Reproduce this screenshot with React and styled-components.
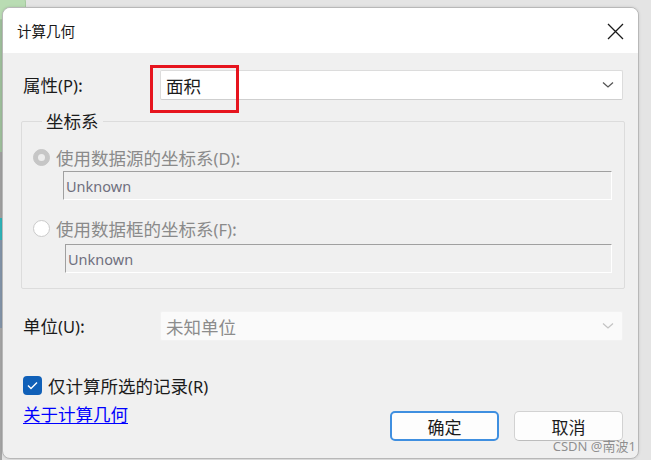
import React from "react";
import styled, { createGlobalStyle } from "styled-components";

const Global = createGlobalStyle`
  html, body { margin: 0; padding: 0; }
  body { background: #e6e6e6; font-family: "Noto Sans CJK SC", "Noto Sans", sans-serif; }
  * { box-sizing: border-box; }
`;

const Page = styled.div`
  position: relative;
  width: 651px;
  height: 460px;
  overflow: hidden;
  background: #e4e4e4;
  padding: 7px 0 0 2px;
`;

const DesktopTab = styled.div`
  position: absolute;
  left: -10px;
  top: -6px;
  width: 36px;
  height: 26px;
  border-radius: 8px;
  background: #b9dcb3;
  border: 1px solid #a7c9a1;
`;

const LeftStrip = styled.div`
  position: absolute;
  left: 0;
  top: 20px;
  width: 2px;
  height: 440px;
  background: linear-gradient(#9fbf9c 0 30%, #a0a0a0 30% 45%, #2fb3b8 45% 50%, #8394a8 50% 70%, #a5a5a5 70%);
`;

const Dialog = styled.div`
  position: relative;
  width: 637px;
  height: 452px;
  border: 1px solid #b8b8b8;
  border-radius: 8px;
  overflow: hidden;
  background: #f0f0f0;
  display: flex;
  flex-direction: column;
  box-shadow: 0 0 3px rgba(0, 0, 0, 0.12);
`;

const TitleBar = styled.div`
  height: 45px;
  flex: none;
  background: #ffffff;
  display: flex;
  align-items: center;
  justify-content: space-between;
  padding: 0 14px 0 14px;
`;

const Title = styled.div`
  font-size: 14.5px;
  color: #1a1a1a;
`;

const CloseBtn = styled.div`
  width: 18px;
  height: 18px;
  display: flex;
  align-items: center;
  justify-content: center;
  margin-top: 1px;
`;

const Body = styled.div`
  flex: 1;
  display: flex;
  flex-direction: column;
  padding: 17px 15px 0 20px;
  font-size: 17.5px;
  color: #1b1b1b;
`;

const FormRow = styled.div`
  display: grid;
  grid-template-columns: 137px 1fr;
  align-items: center;
  height: 30px;
  margin-top: ${(p) => p.$mt || 0}px;
`;

const Label = styled.div`
  line-height: 1;
`;

const Acc = styled.span`
  font-family: "Noto Sans", sans-serif;
  font-size: 16.5px;
`;

const Select = styled.div`
  position: relative;
  height: 30px;
  display: flex;
  align-items: center;
  justify-content: space-between;
  padding: 0 8px 0 5px;
  background: ${(p) => (p.$disabled ? "#fafafa" : "#ffffff")};
  border: 1px solid ${(p) => (p.$disabled ? "#f2f2f2" : "#dcdcdc")};
  border-bottom-color: ${(p) => (p.$disabled ? "#f2f2f2" : "#cfcfcf")};
  border-radius: 2px;
  color: ${(p) => (p.$disabled ? "#8c8c8c" : "#1b1b1b")};
`;

const Highlight = styled.div`
  position: absolute;
  left: -11px;
  top: -6px;
  width: 89px;
  height: 48px;
  border: 3px solid #e6141e;
  pointer-events: none;
`;

const GroupBox = styled.fieldset`
  margin: 11px -2px 0 -2px;
  padding: 15px 12px 0 11px;
  height: 178px;
  border: 1px solid #dcdcdc;
  border-radius: 2px;
`;

const Legend = styled.legend`
  padding: 0 4px;
  margin-left: 9px;
  font-size: 17.5px;
  line-height: 20px;
  color: #1b1b1b;
`;

const RadioRow = styled.div`
  display: flex;
  align-items: center;
  gap: 6px;
  color: #8a8a8a;
  height: 22px;
  margin-top: ${(p) => p.$mt || 0}px;
`;

const Radio = styled.span`
  width: 17px;
  height: 17px;
  border-radius: 50%;
  flex: none;
  display: flex;
  align-items: center;
  justify-content: center;
  background: ${(p) => (p.$checked ? "#c6c6c6" : "#ffffff")};
  border: 1px solid ${(p) => (p.$checked ? "#c6c6c6" : "#cacaca")};
  &::after {
    content: "";
    display: ${(p) => (p.$checked ? "block" : "none")};
    width: 7px;
    height: 7px;
    border-radius: 50%;
    background: #ececec;
  }
`;

const TextBox = styled.div`
  margin: ${(p) => p.$mt}px 0 0 ${(p) => p.$ml}px;
  height: 29px;
  border: 1px solid #ffffff;
  border-top-color: #a0a0a0;
  border-left-color: #a0a0a0;
  background: #f0f0f0;
  display: flex;
  align-items: center;
  padding-left: 2px;
  font-family: "Noto Sans", sans-serif;
  font-size: 14.5px;
  color: #6f6f7e;
`;

const CheckRow = styled.label`
  display: flex;
  align-items: center;
  gap: 6px;
  margin-top: 34px;
  height: 20px;
`;

const CheckBox = styled.span`
  width: 19px;
  height: 19px;
  border-radius: 4px;
  background: #1060b8;
  display: flex;
  align-items: center;
  justify-content: center;
  flex: none;
`;

const Footer = styled.div`
  display: flex;
  justify-content: space-between;
  align-items: flex-start;
  margin-top: 8px;
`;

const Link = styled.a`
  color: #0000ff;
  text-decoration: underline;
  text-underline-offset: 2px;
  font-size: 17.5px;
  line-height: 22px;
  cursor: pointer;
`;

const Buttons = styled.div`
  display: flex;
  gap: 15px;
  margin-top: 8px;
`;

const Button = styled.button`
  width: 109px;
  height: 30px;
  border-radius: 5px;
  background: #fdfdfd;
  font-family: "Noto Sans CJK SC", sans-serif;
  font-size: 17px;
  color: #1b1b1b;
  border: ${(p) => (p.$primary ? "2px solid #3f8fe0" : "1px solid #d2d2d2")};
  border-bottom-color: ${(p) => (p.$primary ? "#3f8fe0" : "#bdbdbd")};
  padding: 0;
  display: flex;
  align-items: center;
  justify-content: center;
`;

const Watermark = styled.div`
  position: absolute;
  right: 2px;
  bottom: 3px;
  font-family: "Noto Sans", "Noto Sans CJK SC", sans-serif;
  font-size: 13px;
  color: rgba(110, 110, 110, 0.75);
  pointer-events: none;
`;

const Chevron = ({ color }) => (
  <svg width="12" height="8" viewBox="0 0 12 8">
    <path d="M1 1.5 L6 6 L11 1.5" fill="none" stroke={color} strokeWidth="1.3" />
  </svg>
);

export default function App() {
  return (
    <>
      <Global />
      <Page>
        <DesktopTab />
        <LeftStrip />
        <Dialog>
          <TitleBar>
            <Title>计算几何</Title>
            <CloseBtn>
              <svg width="17" height="17" viewBox="0 0 17 17">
                <path d="M1 1 L16 16 M16 1 L1 16" stroke="#1a1a1a" strokeWidth="1.3" />
              </svg>
            </CloseBtn>
          </TitleBar>
          <Body>
            <FormRow>
              <Label>
                属性<Acc>(P)</Acc>:
              </Label>
              <Select>
                <span>面积</span>
                <Chevron color="#555" />
                <Highlight />
              </Select>
            </FormRow>
            <GroupBox>
              <Legend>坐标系</Legend>
              <RadioRow>
                <Radio $checked />
                <span>
                  使用数据源的坐标系<Acc>(D)</Acc>:
                </span>
              </RadioRow>
              <TextBox $mt={3} $ml={30}>Unknown</TextBox>
              <RadioRow $mt={17}>
                <Radio />
                <span>
                  使用数据框的坐标系<Acc>(F)</Acc>:
                </span>
              </RadioRow>
              <TextBox $mt={5} $ml={32}>Unknown</TextBox>
            </GroupBox>
            <FormRow $mt={22}>
              <Label>
                单位<Acc>(U)</Acc>:
              </Label>
              <Select $disabled>
                <span>未知单位</span>
                <Chevron color="#c4c4c4" />
              </Select>
            </FormRow>
            <CheckRow>
              <CheckBox>
                <svg width="11" height="9" viewBox="0 0 11 9">
                  <path d="M1 4.5 L4 7.5 L10 1.5" fill="none" stroke="#fff" strokeWidth="1.4" />
                </svg>
              </CheckBox>
              <span>
                仅计算所选的记录<Acc>(R)</Acc>
              </span>
            </CheckRow>
            <Footer>
              <Link>关于计算几何</Link>
              <Buttons>
                <Button $primary>确定</Button>
                <Button>取消</Button>
              </Buttons>
            </Footer>
          </Body>
          <Watermark>CSDN @南波1</Watermark>
        </Dialog>
      </Page>
    </>
  );
}
